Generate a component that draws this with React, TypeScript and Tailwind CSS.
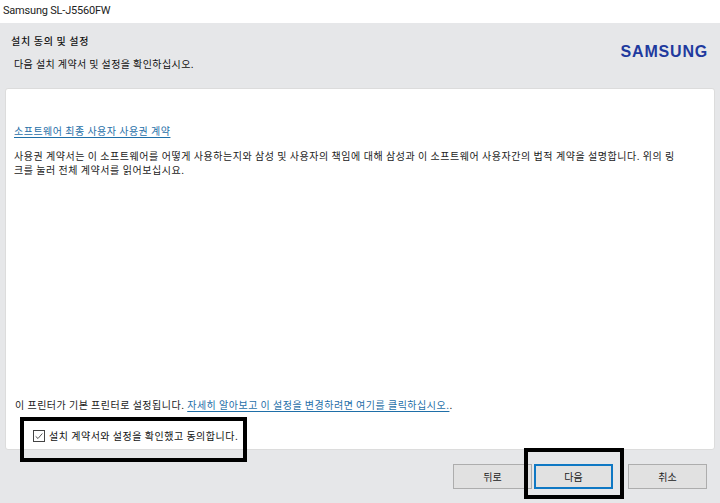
const kr = "font-['Noto_Sans_CJK_KR','Noto_Sans',sans-serif]";

const FooterButton = ({ label, primary }: { label: string; primary?: boolean }) => (
  <button
    className={`w-[79px] h-[25px] flex items-center justify-center text-[10px] text-[#222] bg-[#e1e1e1] border ${
      primary ? "border-2 border-[#0f78c4]" : "border-[#adadad]"
    }`}
  >
    {label}
  </button>
);

export default function App() {
  return (
    <div className={`relative w-[720px] h-[503px] overflow-hidden flex flex-col bg-[#e6e7e9] ${kr}`}>
      {/* title bar */}
      <div className="h-[23px] bg-white pl-[3px] flex items-center text-[11px] tracking-[-0.2px] text-[#222] font-['Roboto',sans-serif]">
        Samsung SL-J5560FW
      </div>

      {/* header */}
      <div className="h-[65px] relative flex justify-between">
        <div className="pl-[11px] pt-[11px] text-[#111]">
          <div className="text-[10px] leading-[14px] font-medium tracking-[0.7px]">설치 동의 및 설정</div>
          <div className="text-[10px] leading-[14px] mt-[9px] ml-[3px] tracking-[0.42px]">
            다음 설치 계약서 및 설정을 확인하십시오.
          </div>
        </div>
        <div className="pr-[12px] pt-[20px] text-[#1f3a9e] text-[16px] leading-[18px] font-bold tracking-[0.8px] font-['Liberation_Sans',sans-serif]">
          SAMSUNG
        </div>
      </div>

      {/* panel */}
      <div className="mx-[5px] h-[362px] bg-white border border-[#dcdcdc] rounded-[3px] pl-[8px] pr-[6px] flex flex-col text-[#222]">
        <a className="mt-[35px] self-start text-[10px] leading-[14px] text-[#1f6fa8] underline underline-offset-2 tracking-[0.5px]">
          소프트웨어 최종 사용자 사용권 계약
        </a>
        <p className="mt-[11px] text-[10px] leading-[14px] tracking-[0.55px] whitespace-nowrap">
          사용권 계약서는 이 소프트웨어를 어떻게 사용하는지와 삼성 및 사용자의 책임에 대해 삼성과 이 소프트웨어 사용자간의 법적 계약을 설명합니다. 위의 링
          <br />
          크를 눌러 전체 계약서를 읽어보십시요.
        </p>
        <div className="mt-auto ml-[1px] text-[10px] leading-[14px] tracking-[0.5px] whitespace-nowrap">
          이 프린터가 기본 프린터로 설정됩니다.{" "}
          <a className="text-[#1f6fa8] underline underline-offset-2">자세히 알아보고 이 설정을 변경하려면 여기를 클릭하십시오.</a>.
        </div>
        <label className="mt-[17px] mb-[6px] ml-[19px] flex items-center gap-[4px] text-[10px] leading-[14px] tracking-[0.52px] text-[#111]">
          <span className="w-[12px] h-[12px] border border-[#444] flex items-center justify-center bg-white">
            <svg viewBox="0 0 12 12" className="w-[10px] h-[10px]" fill="none" stroke="#333" strokeWidth="1">
              <path d="M2 6.5 L4.8 9 L10 3" />
            </svg>
          </span>
          설치 계약서와 설정을 확인했고 동의합니다.
        </label>
      </div>

      {/* footer */}
      <div className="flex-1 flex justify-end items-start pt-[14px] pr-[13px] gap-[2px]">
        <FooterButton label="뒤로" />
        <FooterButton label="다음" primary />
        <div className="w-[11px]" />
        <FooterButton label="취소" />
      </div>

      {/* black highlight boxes drawn over the dialog */}
      <div className="absolute left-[20px] top-[417px] w-[227px] h-[45px] border-[4px] border-black" />
      <div className="absolute left-[524px] top-[448px] w-[100px] h-[51px] border-[4px] border-black" />
    </div>
  );
}
